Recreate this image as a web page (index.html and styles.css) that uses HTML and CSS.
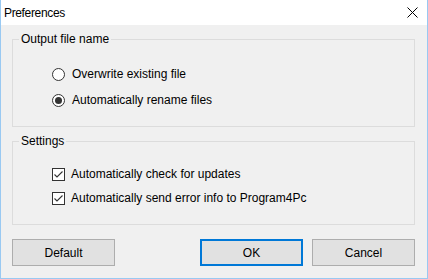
FILE: index.html
```html
<!DOCTYPE html>
<html lang="en">
<head>
    <meta charset="UTF-8">
    <meta name="viewport" content="width=device-width, initial-scale=1.0">
    <title>Preferences</title>
    <link rel="stylesheet" href="styles.css">
</head>
<body>
    <div class="window">
        <div class="titlebar">
            <span class="title">Preferences</span>
            <span class="close">
                <svg width="11" height="11" viewBox="0 0 11 11">
                    <path d="M0.5 0.5 L10.5 10.5 M10.5 0.5 L0.5 10.5" stroke="#000" stroke-width="1" fill="none"/>
                </svg>
            </span>
        </div>

        <div class="content">
            <fieldset class="group group-output">
                <legend>Output file name</legend>
                <label class="option radio-row">
                    <svg class="mark" width="13" height="13" viewBox="0 0 13 13">
                        <circle cx="6.5" cy="6.5" r="6" fill="#fff" stroke="#333"/>
                    </svg>
                    <span>Overwrite existing file</span>
                </label>
                <label class="option radio-row">
                    <svg class="mark" width="13" height="13" viewBox="0 0 13 13">
                        <circle cx="6.5" cy="6.5" r="6" fill="#fff" stroke="#333"/>
                        <circle cx="6.5" cy="6.5" r="3.5" fill="#333"/>
                    </svg>
                    <span>Automatically rename files</span>
                </label>
            </fieldset>

            <fieldset class="group group-settings">
                <legend>Settings</legend>
                <label class="option check-row">
                    <svg class="mark" width="13" height="13" viewBox="0 0 13 13">
                        <rect x="0.5" y="0.5" width="12" height="12" fill="#fff" stroke="#333"/>
                        <path d="M2.5 6.5 L5 9 L10.5 3.5" stroke="#333" stroke-width="1.1" fill="none"/>
                    </svg>
                    <span>Automatically check for updates</span>
                </label>
                <label class="option check-row">
                    <svg class="mark" width="13" height="13" viewBox="0 0 13 13">
                        <rect x="0.5" y="0.5" width="12" height="12" fill="#fff" stroke="#333"/>
                        <path d="M2.5 6.5 L5 9 L10.5 3.5" stroke="#333" stroke-width="1.1" fill="none"/>
                    </svg>
                    <span>Automatically send error info to Program4Pc</span>
                </label>
            </fieldset>

            <div class="buttons">
                <button class="btn">Default</button>
                <div class="spacer"></div>
                <button class="btn primary">OK</button>
                <button class="btn">Cancel</button>
            </div>
        </div>
    </div>
</body>
</html>
```
FILE: styles.css
```css
* {
    margin: 0;
    padding: 0;
    box-sizing: border-box;
}

body {
    font-family: 'Liberation Sans', Arial, sans-serif;
    font-size: 12px;
    line-height: 16px;
    color: #000;
    background: #fff;
}

.window {
    width: 428px;
    height: 279px;
    display: flex;
    flex-direction: column;
    border: 1px solid #99c9f2;
    border-top: none;
}

.titlebar {
    height: 25px;
    background: #fff;
    display: flex;
    align-items: center;
    justify-content: space-between;
    padding: 0 9px 0 3px;
}

.title {
    font-size: 12px;
    letter-spacing: -0.35px;
}

.close {
    display: flex;
    align-items: center;
}

.content {
    flex: 1;
    background: #f0f0f0;
    padding: 6px 12px 0 11px;
}

.group {
    border: 1px solid #dcdcdc;
    padding: 0 0 18px 6px;
}

.group legend {
    padding: 0 2px;
    line-height: 16px;
}

.group-output .option:first-of-type { margin-top: 19px; }
.group-output .option + .option { margin-top: 10px; }

.group-settings {
    margin-top: 6px;
}

.group-settings .option:first-of-type { margin-top: 17px; }
.group-settings .option + .option { margin-top: 8px; }

.option {
    display: flex;
    align-items: center;
    height: 16px;
    margin-left: 33px;
}

.option .mark {
    flex: none;
    display: block;
}

.radio-row .mark { margin-right: 7px; }
.check-row .mark { margin-right: 6px; }

.buttons {
    display: flex;
    gap: 9px;
    margin-top: 14px;
}

.spacer {
    flex: 1;
}

.btn {
    width: 103px;
    height: 27px;
    font-family: inherit;
    font-size: 12px;
    color: #000;
    background: #e1e1e1;
    border: 1px solid #adadad;
}

.btn.primary {
    border: 2px solid #0078d7;
}
```
